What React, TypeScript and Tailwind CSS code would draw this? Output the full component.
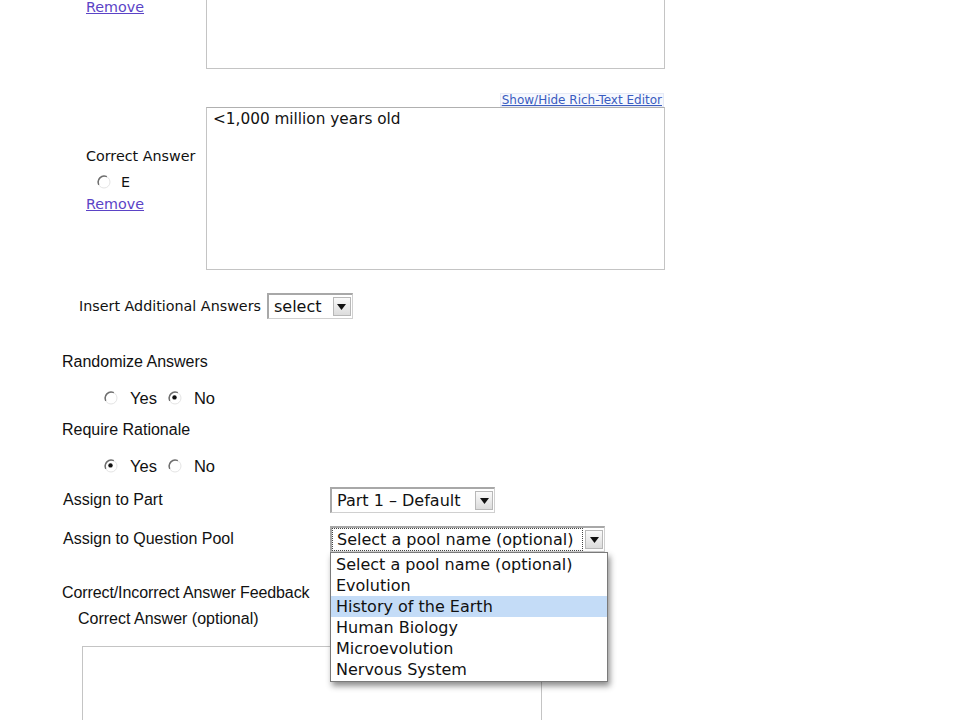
import React from "react";

const lucida = "font-['DejaVu_Sans',sans-serif]";
const arial = "font-['Liberation_Sans',Arial,sans-serif]";

const Radio = ({ checked = false }: { checked?: boolean }) => (
  <svg width="14" height="14" viewBox="0 0 14 14" className="shrink-0">
    <circle cx="7" cy="7" r="6" fill="#fff" stroke="#e4e4e4" strokeWidth="1" />
    <path d="M1.6 9.2 A6 6 0 0 1 9.2 1.4" fill="none" stroke="#6f6f6f" strokeWidth="1.5" strokeLinecap="round" />
    {checked && <circle cx="6.5" cy="6.4" r="2.2" fill="#111" />}
  </svg>
);

const SelectBox = ({ label, width, focused = false }: { label: string; width: string; focused?: boolean }) => (
  <div
    className={`flex items-stretch h-[26px] ${width} bg-white border-t-2 border-l-2 border-t-[#a8a8a8] border-l-[#a8a8a8] border-r border-b border-r-[#d0d0d0] border-b-[#d0d0d0] ${lucida}`}
  >
    <div className={`flex-1 flex items-center pl-[5px] text-[16px] text-[#111] ${focused ? "outline-1 outline-dotted outline-[#444] -outline-offset-1" : ""}`}>
      {label}
    </div>
    <div className="w-[18px] my-[2px] mr-[1px] ml-[2px] flex items-center justify-center bg-gradient-to-b from-[#fafafa] to-[#dcdcdc] border border-[#b8b8b8]">
      <svg width="9" height="6" viewBox="0 0 9 6">
        <path d="M0 0 H9 L4.5 6 Z" fill="#111" />
      </svg>
    </div>
  </div>
);

const RichLink = ({ faded = false }: { faded?: boolean }) => (
  <span
    className={`text-[12px] leading-[13px] underline px-[1px] ${lucida} ${
      faded ? "text-[#e9e9ef]" : "text-[#3a5cc0] bg-[#f6f8fe] border border-[#e6eaf6]"
    }`}
  >
    Show/Hide Rich-Text Editor
  </span>
);

const AnswerBlock = ({ letter, text, first = false }: { letter: string; text?: string; first?: boolean }) => (
  <div className="flex flex-col">
    <div className="flex justify-end w-[664px] h-[14px]">
      <RichLink />
    </div>
    <div className="flex items-center">
      <div
        className={`w-[120px] ml-[86px] ${first ? "pb-[10px]" : "pb-[18px]"} flex flex-col text-[14.3px] text-[#111] ${lucida}`}
      >
        <span className="leading-[18px]">Correct Answer</span>
        <div className="flex items-center gap-[10px] ml-[11px] mt-[8px] h-[18px]">
          <Radio />
          <span className="leading-[18px]">{letter}</span>
        </div>
        <a className="underline text-[#5b43c6] leading-[18px] mt-[4px]">Remove</a>
      </div>
      <div
        className={`w-[459px] h-[163px] border border-[#c4c4c4] border-t-[#b0b0b0] px-[6px] pt-0 text-[15.3px] text-[#111] ${lucida}`}
      >
        {text}
      </div>
    </div>
  </div>
);

const RadioPair = ({ yes }: { yes: boolean }) => (
  <div className={`flex items-center h-[20px] ml-[104px] text-[16.5px] text-[#111] ${arial}`}>
    <Radio checked={yes} />
    <span className="ml-[12px]">Yes</span>
    <span className="ml-[11px]">
      <Radio checked={!yes} />
    </span>
    <span className="ml-[12px]">No</span>
  </div>
);

const pools = [
  "Select a pool name (optional)",
  "Evolution",
  "History of the Earth",
  "Human Biology",
  "Microevolution",
  "Nervous System",
];

export default function App() {
  return (
    <div className="relative w-[960px] h-[720px] overflow-hidden bg-white">
      <div className="-mt-[108px] flex flex-col">
        <AnswerBlock letter="D" first />
        <div className="mt-[24px]">
          <AnswerBlock letter="E" text="<1,000 million years old" />
        </div>

        <div className={`flex items-center mt-[23px] ml-[79px] gap-[6px] text-[14.3px] text-[#111] ${lucida}`}>
          <span className="mt-[2px]">Insert Additional Answers</span>
          <SelectBox label="select" width="w-[86px]" />
        </div>

        <div className={`ml-[62px] mt-[34px] text-[16px] leading-[18px] text-[#111] ${arial}`}>
          Randomize Answers
        </div>
        <div className="mt-[17px]">
          <RadioPair yes={false} />
        </div>
        <div className={`ml-[62px] mt-[13px] text-[16px] leading-[18px] text-[#111] ${arial}`}>
          Require Rationale
        </div>
        <div className="mt-[17px]">
          <RadioPair yes={true} />
        </div>

        <div className={`grid grid-cols-[267px_auto] items-center ml-[63px] mt-[11px] gap-y-[13px] text-[16px] text-[#111] ${arial}`}>
          <span>Assign to Part</span>
          <SelectBox label="Part 1 – Default" width="w-[165px]" />
          <span>Assign to Question Pool</span>
          <div className="relative">
            <SelectBox label="Select a pool name (optional)" width="w-[275px]" focused />
            <div className={`absolute left-0 top-[26px] w-[278px] z-10 bg-white border border-[#7a7a7a] shadow-[2px_4px_6px_rgba(0,0,0,0.45)] py-[1px] text-[16px] text-[#111] ${lucida}`}>
              {pools.map((p) => (
                <div
                  key={p}
                  className={`h-[21px] leading-[21px] pl-[5px] ${p === "History of the Earth" ? "bg-[#c4dcf7]" : ""}`}
                >
                  {p}
                </div>
              ))}
            </div>
          </div>
        </div>

        <div className={`ml-[62px] mt-[32px] text-[16px] leading-[18px] tracking-[-0.1px] text-[#111] ${arial}`}>
          Correct/Incorrect Answer Feedback
        </div>
        <div className={`ml-[78px] mt-[8px] text-[16px] leading-[18px] text-[#111] ${arial}`}>
          Correct Answer (optional)
        </div>
        <div className="flex justify-end w-[541px] h-[14px] mt-[3px]">
          <RichLink faded />
        </div>
        <div className="ml-[82px] mt-[1px] w-[460px] h-[163px] border border-[#c4c4c4]" />
      </div>
    </div>
  );
}
